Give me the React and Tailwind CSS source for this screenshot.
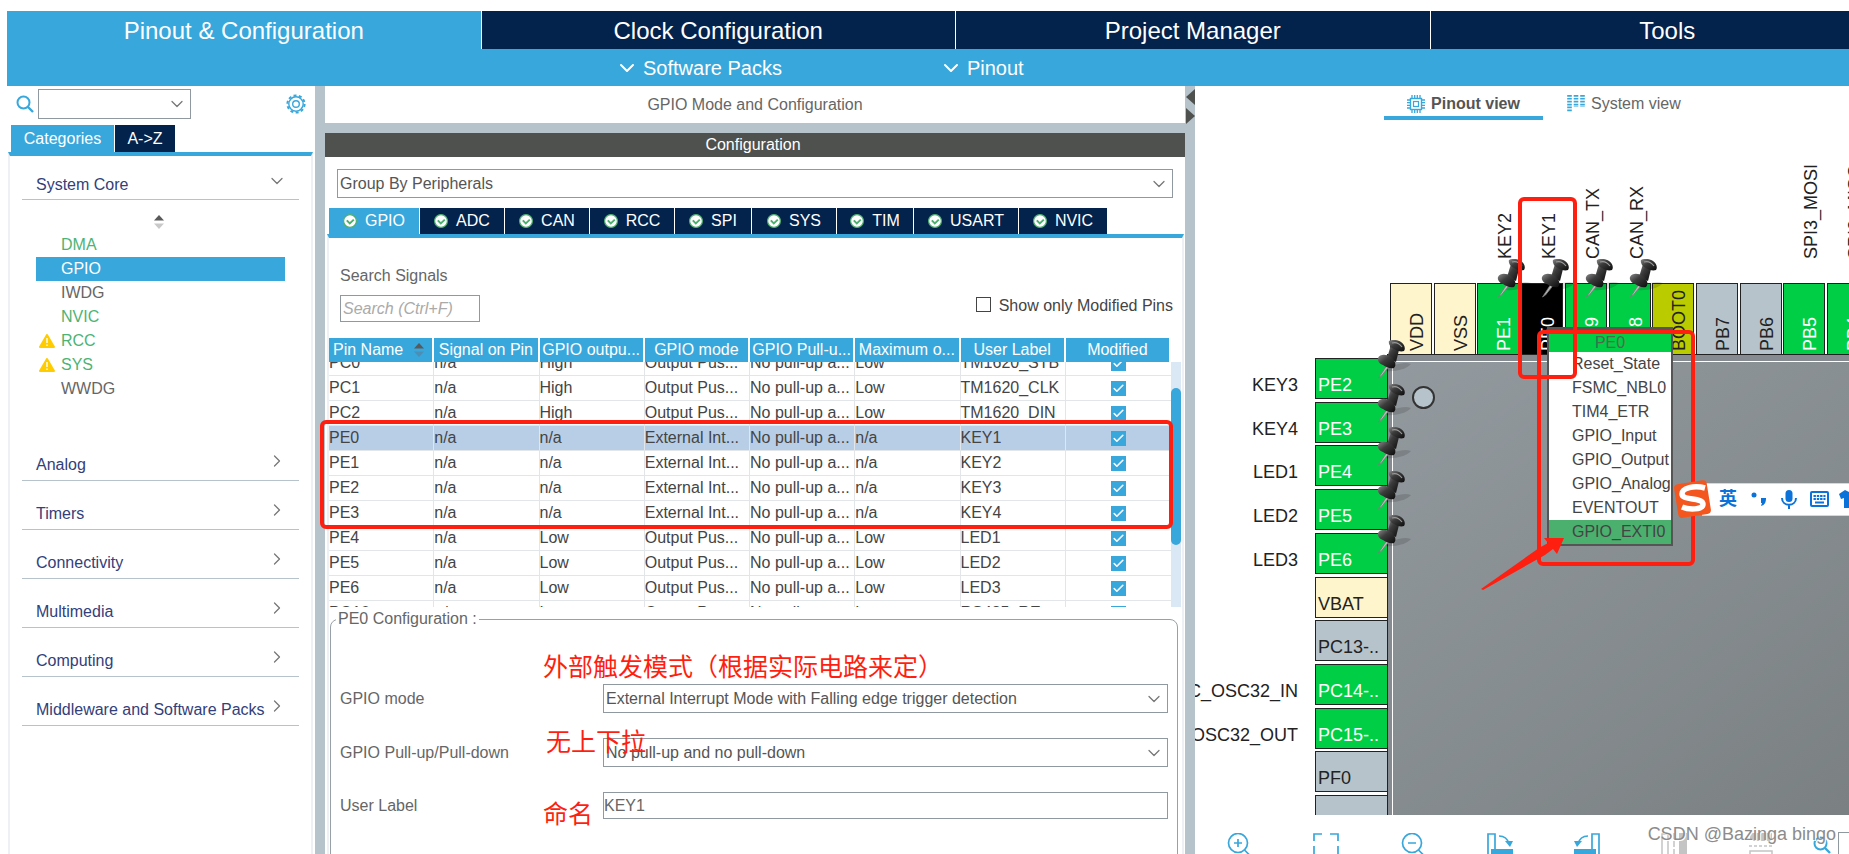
import { useEffect, useRef } from 'react';
import { ChevronDown, ChevronRight, Check } from 'lucide-react';
import clsx from 'clsx';

const MAIN_TABS = ['Pinout & Configuration', 'Clock Configuration', 'Project Manager', 'Tools'];

const CORE_ITEMS = [
  { name: 'DMA', used: true },
  { name: 'GPIO', used: true, selected: true },
  { name: 'IWDG' },
  { name: 'NVIC', used: true },
  { name: 'RCC', used: true, warn: true },
  { name: 'SYS', used: true, warn: true },
  { name: 'WWDG' },
];

const CATEGORIES = ['Analog', 'Timers', 'Connectivity', 'Multimedia', 'Computing', 'Middleware and Software Packs'];

const PERIPHERALS = [
  ['GPIO', 'w-[90px]'],
  ['ADC', 'w-[84px]'],
  ['CAN', 'w-[84px]'],
  ['RCC', 'w-[84px]'],
  ['SPI', 'w-[76px]'],
  ['SYS', 'w-[84px]'],
  ['TIM', 'w-[76px]'],
  ['USART', 'w-[104px]'],
  ['NVIC', 'w-[88px]'],
];

const COLUMNS = ['Pin Name', 'Signal on Pin', 'GPIO outpu...', 'GPIO mode', 'GPIO Pull-u...', 'Maximum o...', 'User Label', 'Modified'];

const OUT = 'Output Pus...';
const EXT = 'External Int...';
const PULL = 'No pull-up a...';

const ROWS = [
  ['PC0', 'n/a', 'High', OUT, PULL, 'Low', 'TM1620_STB'],
  ['PC1', 'n/a', 'High', OUT, PULL, 'Low', 'TM1620_CLK'],
  ['PC2', 'n/a', 'High', OUT, PULL, 'Low', 'TM1620_DIN'],
  ['PE0', 'n/a', 'n/a', EXT, PULL, 'n/a', 'KEY1'],
  ['PE1', 'n/a', 'n/a', EXT, PULL, 'n/a', 'KEY2'],
  ['PE2', 'n/a', 'n/a', EXT, PULL, 'n/a', 'KEY3'],
  ['PE3', 'n/a', 'n/a', EXT, PULL, 'n/a', 'KEY4'],
  ['PE4', 'n/a', 'Low', OUT, PULL, 'Low', 'LED1'],
  ['PE5', 'n/a', 'Low', OUT, PULL, 'Low', 'LED2'],
  ['PE6', 'n/a', 'Low', OUT, PULL, 'Low', 'LED3'],
  ['PG10', 'n/a', 'Low', OUT, PULL, 'Low', 'RS485_RE'],
];

const PIN_COLORS = {
  power: 'bg-[#fff5cc] text-[#222]',
  used: 'bg-[#00cf46] text-white',
  active: 'bg-black text-white',
  boot: 'bg-[#bacb00] text-[#222]',
  free: 'bg-[#b7c3ca] text-[#222]',
};

const TOP_PINS = [
  { name: 'VDD', kind: 'power' },
  { name: 'VSS', kind: 'power' },
  { name: 'PE1', kind: 'used', label: 'KEY2', pinned: true },
  { name: 'PE0', kind: 'active', label: 'KEY1', pinned: true },
  { name: 'PB9', kind: 'used', label: 'CAN_TX', pinned: true },
  { name: 'PB8', kind: 'used', label: 'CAN_RX', pinned: true },
  { name: 'BOOT0', kind: 'boot' },
  { name: 'PB7', kind: 'free' },
  { name: 'PB6', kind: 'free' },
  { name: 'PB5', kind: 'used', label: 'SPI3_MOSI' },
  { name: 'PB4', kind: 'used', label: 'SPI3_MISO' },
];

const LEFT_PINS = [
  { name: 'PE2', kind: 'used', label: 'KEY3', pinned: true },
  { name: 'PE3', kind: 'used', label: 'KEY4', pinned: true },
  { name: 'PE4', kind: 'used', label: 'LED1', pinned: true },
  { name: 'PE5', kind: 'used', label: 'LED2', pinned: true },
  { name: 'PE6', kind: 'used', label: 'LED3', pinned: true },
  { name: 'VBAT', kind: 'power' },
  { name: 'PC13-..', kind: 'free' },
  { name: 'PC14-..', kind: 'used', label: 'RCC_OSC32_IN' },
  { name: 'PC15-..', kind: 'used', label: 'RCC_OSC32_OUT' },
  { name: 'PF0', kind: 'free' },
  { name: '', kind: 'free' },
];

const PIN_PITCH = 43.7;
const pinOffset = (start, i) => Math.round(start + i * PIN_PITCH);

const PIN_SIGNALS = ['Reset_State', 'FSMC_NBL0', 'TIM4_ETR', 'GPIO_Input', 'GPIO_Output', 'GPIO_Analog', 'EVENTOUT', 'GPIO_EXTI0'];

// ---------- icons ----------

const SearchIcon = () => (
  <svg width="18" height="18" viewBox="0 0 18 18" fill="none" stroke="#38a7dc" strokeWidth="2">
    <circle cx="7.5" cy="7.5" r="6" />
    <path d="M12 12l5 5" strokeWidth="2.4" />
  </svg>
);

const GearIcon = () => (
  <svg width="20" height="20" viewBox="0 0 20 20" fill="none" stroke="#38a7dc">
    <circle cx="10" cy="10" r="8.6" strokeWidth="2" strokeDasharray="3 2.4" />
    <circle cx="10" cy="10" r="7.2" strokeWidth="1.4" />
    <circle cx="10" cy="10" r="3.3" strokeWidth="1.4" />
  </svg>
);

const SortIcon = ({ faded = '#c9c9c9' }) => (
  <svg width="10" height="14" viewBox="0 0 10 14">
    <path d="M0 5.5L5 0l5 5.5z" fill="#5a5a5a" />
    <path d="M0 8.5L5 14l5-5.5z" fill={faded} />
  </svg>
);

const WarnIcon = () => (
  <svg width="16" height="14" viewBox="0 0 16 14">
    <path d="M8 1L15 13H1z" fill="#ffcc00" stroke="#ffcc00" strokeWidth="2" strokeLinejoin="round" />
    <path d="M8 4v5M8 10.5v1.6" stroke="#fff" strokeWidth="1.4" />
  </svg>
);

const OkIcon = () => (
  <svg width="14" height="14" viewBox="0 0 14 14" fill="none">
    <circle cx="7" cy="7" r="6.4" fill="#fff" stroke="#4caf6e" strokeWidth="1.2" />
    <path d="M3.8 6.4l3 3 4-3.8" stroke="#4caf6e" strokeWidth="2" />
  </svg>
);

const ChipIcon = () => (
  <svg width="18" height="18" viewBox="0 0 18 18" fill="none" stroke="#38a7dc">
    <rect x="3.5" y="3.5" width="11" height="11" strokeWidth="1.4" />
    <rect x="6.5" y="6.5" width="5" height="5" strokeWidth="1.2" />
    <path d="M5 0v3M7.7 0v3M10.3 0v3M13 0v3M5 15v3M7.7 15v3M10.3 15v3M13 15v3M0 5h3M0 7.7h3M0 10.3h3M0 13h3M15 5h3M15 7.7h3M15 10.3h3M15 13h3" strokeWidth="1.3" />
  </svg>
);

const SystemIcon = () => (
  <svg width="18" height="18" viewBox="0 0 18 18" stroke="#38a7dc" strokeWidth="4.6" strokeDasharray="1.7 1.2">
    <path d="M2.5 0v17M9 0v12M15.5 0v12" />
  </svg>
);

const ZoomGlyph = ({ plus }) => (
  <svg width="26" height="26" viewBox="0 0 26 26" fill="none" stroke="#38a7dc" strokeWidth="1.7">
    <circle cx="12" cy="10" r="9.5" />
    <path d="M8 10h8M18.5 17l5 5" />
    {plus && <path d="M12 6v8" />}
  </svg>
);

const FitGlyph = () => (
  <svg width="26" height="26" viewBox="0 0 26 26" fill="none" stroke="#38a7dc" strokeWidth="1.7">
    <path d="M1 8V1h8M17 1h8v7M1 13v9M25 13v9" />
  </svg>
);

const RotateGlyph = ({ flip }) => (
  <svg width="26" height="26" viewBox="0 0 26 26" fill="none" stroke="#38a7dc" strokeWidth="1.7" className={flip ? '-scale-x-100' : ''}>
    <path d="M1 24V1h7v23" />
    <path d="M4 16h22v8H4z" fill="#38a7dc" stroke="none" />
    <path d="M12 3c6 0 9 4 10 8" />
    <path d="M18 8h8l-3 6z" fill="#38a7dc" stroke="none" />
  </svg>
);

const GrayColumns = () => (
  <svg width="26" height="26" viewBox="0 0 26 26" fill="none" stroke="#c4c4c4" strokeWidth="1.5">
    <path d="M1 24V1h6v23" />
    <path d="M13 0v26" strokeDasharray="6 2" />
    <path d="M18 0h8v24h-8z" fill="#c4c4c4" stroke="none" />
  </svg>
);

const GrayRows = () => (
  <svg width="26" height="26" viewBox="0 0 26 26" fill="none" stroke="#c4c4c4" strokeWidth="1.5">
    <path d="M2 0h22v8H2z" fill="#c4c4c4" stroke="none" />
    <path d="M1 13h24" strokeDasharray="3 2" />
    <path d="M2 18h22v7H2z" />
  </svg>
);

const PushPin = ({ className, style }) => (
  <svg width="40" height="40" viewBox="0 0 40 40" className={className} style={style}>
    <defs>
      <linearGradient id="pinHead" x1="0" y1="0" x2="1" y2="1">
        <stop offset="0" stopColor="#8a8a8a" />
        <stop offset="0.4" stopColor="#3c3c3c" />
        <stop offset="1" stopColor="#0c0c0c" />
      </linearGradient>
    </defs>
    <path d="M9 30c6-4 16-9 25-6-4 5-16 8-25 7z" fill="#000" opacity="0.14" />
    <path d="M10 25L1.500 38l3-2 8-10z" fill="#b9b9b9" stroke="#777" strokeWidth="0.8" />
    <path d="M14 5l8 5-3 12-9-4z" fill="url(#pinHead)" />
    <path d="M1 18c2-4 8-4 13-1 4 3 6 8 3 11-4 1-8-1-11-3-3-1-6-4-5-7z" fill="url(#pinHead)" />
    <path d="M12 1c4-2 9-1 12 1 3 2 5 6 3 9-3 1-7 0-10-2-3-1-6-5-5-8z" fill="url(#pinHead)" />
    <path d="M15 3c3-1 7 0 10 4" stroke="#999" strokeWidth="1.2" fill="none" />
  </svg>
);

// ---------- shared controls ----------

function Combo({ id, label, value, className }) {
  return (
    <div className={clsx('relative', className)}>
      <select id={id} aria-label={label} className="h-full w-full appearance-none border border-[#8f999f] bg-white pl-0.5 pr-8 text-[#555] outline-none">
        <option>{value}</option>
      </select>
      <ChevronDown size={20} strokeWidth={1.5} className="pointer-events-none absolute right-1 top-1/2 -translate-y-1/2 text-[#777]" />
    </div>
  );
}

function Note({ className, children }) {
  return <p className={clsx('pointer-events-none absolute whitespace-nowrap text-[25px] leading-8 text-[#ff1f10]', className)}>{children}</p>;
}

function RedBox({ className }) {
  return <div className={clsx('pointer-events-none absolute rounded-md border-4 border-[#ff1f10]', className)} />;
}

// ---------- header ----------

function Header() {
  return (
    <header className="ml-[7px] mt-[11px] shrink-0 overflow-hidden bg-[#38a7dc] text-white">
      <nav className="flex h-[38px] w-[1897px] gap-px">
        {MAIN_TABS.map((tab, i) => (
          <button key={tab} className={clsx('flex-1 pt-px text-2xl leading-9', i > 0 && 'bg-[#03224c] shadow-[-1px_0_#fff]')}>
            {tab}
          </button>
        ))}
      </nav>
      <div className="flex h-[37px] items-center gap-[157px] pl-[608px] text-xl">
        {['Software Packs', 'Pinout'].map((menu) => (
          <button key={menu} className="flex items-center gap-2">
            <ChevronDown size={24} strokeWidth={2} className="-mr-1" />
            {menu}
          </button>
        ))}
      </div>
    </header>
  );
}

// ---------- left panel ----------

function Sidebar() {
  return (
    <aside className="overflow-hidden pl-2">
      <div className="flex h-9 items-center pl-2 pr-[9px]">
        <SearchIcon />
        <Combo label="Search peripherals" value="" className="ml-1 h-[30px] w-[153px]" />
        <button aria-label="Settings" className="ml-auto">
          <GearIcon />
        </button>
      </div>
      <div className="mt-[3px] flex gap-px pl-[3px]">
        <button className="h-[27px] w-[103px] bg-[#38a7dc] text-white">Categories</button>
        <button className="h-[27px] w-[60px] bg-[#03224c] text-white">A-&gt;Z</button>
      </div>
      <div className="mr-0.5 h-full border-x-2 border-t-4 border-x-[#eef1f4] border-t-[#38a7dc] px-3 pt-1">
        <button className="flex h-10 w-full items-end justify-between border-b border-[#b7c3ca] pb-0.5 pl-[14px] pr-3 text-[#33407a]">
          System Core
          <ChevronDown size={20} strokeWidth={1.5} className="mb-[6px] text-[#777]" />
        </button>
        <div className="mt-[15px] flex justify-center pr-1">
          <SortIcon />
        </div>
        <ul className="mt-1 h-[199px] px-[14px]">
          {CORE_ITEMS.map(({ name, used, selected, warn }) => (
            <li
              key={name}
              className={clsx(
                'grid h-6 grid-cols-[25px_1fr] items-center',
                selected ? 'bg-[#38a7dc] text-white' : used ? 'text-[#4db374]' : 'text-[#666]'
              )}
            >
              <span className="pl-[3px]">{warn && <WarnIcon />}</span>
              {name}
            </li>
          ))}
        </ul>
        {CATEGORIES.map((name) => (
          <button key={name} className="flex h-[49px] w-full items-end justify-between border-b border-[#b7c3ca] pb-[3px] pl-[14px] pr-3 text-[#33407a]">
            <span className="whitespace-nowrap">{name}</span>
            <ChevronRight size={20} strokeWidth={1.5} className="mb-[6px] shrink-0 text-[#777]" />
          </button>
        ))}
      </div>
    </aside>
  );
}

// ---------- pin table ----------

function PinTable() {
  const scroller = useRef(null);

  useEffect(() => {
    scroller.current.scrollTop = 11;
  }, []);

  return (
    <div className="relative mt-4 flex pr-px">
      <div ref={scroller} className="h-[269px] flex-1 overflow-hidden">
        <table className="w-full table-fixed border-separate border-spacing-0">
          <thead className="sticky top-0 z-10">
            <tr className="h-6">
              {COLUMNS.map((col, i) => (
                <th key={col} className="border-r-2 border-white bg-[#38a7dc] p-0 font-normal text-white">
                  <div className={clsx('whitespace-nowrap', i === 0 && 'flex items-center justify-between pl-1 pr-2')}>
                    {col}
                    {i === 0 && <SortIcon faded="#4c8fb5" />}
                  </div>
                </th>
              ))}
            </tr>
          </thead>
          <tbody>
            {ROWS.map((row) => (
              <tr key={row[0]} className={clsx('h-[25px] text-[#444]', row[0] === 'PE0' && 'bg-[#b8cee6]')}>
                {row.map((cell, i) => (
                  <td key={i} className="whitespace-nowrap border-b border-r border-[#e3e6e9] p-0">
                    {cell}
                  </td>
                ))}
                <td className="border-b border-[#e3e6e9] p-0">
                  <span className="mx-auto grid w-[15px]">
                    <input type="checkbox" defaultChecked aria-label={`${row[0]} modified`} className="size-[15px] appearance-none bg-[#38a7dc] [grid-area:1/1]" />
                    <Check size={15} strokeWidth={3} className="pointer-events-none p-px text-white [grid-area:1/1]" />
                  </span>
                </td>
              </tr>
            ))}
          </tbody>
        </table>
      </div>
      <div className="mt-6 w-[10px] bg-[#d9e8f4] pt-[26px]">
        <div className="h-[157px] rounded-full bg-[#38a7dc]" />
      </div>
      <RedBox className="-left-[9px] right-[9px] top-[82px] h-[109px]" />
    </div>
  );
}

// ---------- middle panel ----------

function ConfigPanel() {
  return (
    <section className="min-w-0 bg-white">
      <h2 className="h-[37px] text-center leading-[37px] text-[#666]">GPIO Mode and Configuration</h2>
      <h3 className="mb-3 h-[34px] border-t-[10px] border-[#b7c3ca] bg-[#4f514f] pr-1 text-center text-white">Configuration</h3>
      <Combo label="Group by" value="Group By Peripherals" className="mx-3 h-[29px]" />
      <div className="ml-1 mt-[10px] flex gap-px">
        {PERIPHERALS.map(([name, width], i) => (
          <button key={name} className={clsx('flex h-[26px] items-center justify-center gap-2 text-white', width, i ? 'bg-[#03224c]' : 'bg-[#38a7dc]')}>
            <OkIcon />
            {name}
          </button>
        ))}
      </div>
      <div className="ml-0.5 mr-px border-x-2 border-t-4 border-x-[#eef1f4] border-t-[#38a7dc] pt-[26px]">
        <div className="pl-[11px] pr-[9px] text-[#666]">
          <label htmlFor="signals">Search Signals</label>
          <div className="mt-[7px] flex h-[27px] justify-between">
            <input id="signals" placeholder="Search (Ctrl+F)" className="w-[140px] border border-[#8f999f] px-0.5 italic outline-none placeholder:text-[#aaa]" />
            <label className="flex items-start gap-2 pt-px leading-5 text-[#444]">
              <input type="checkbox" className="mt-px size-[15px] appearance-none border border-[#444] bg-white" />
              Show only Modified Pins
            </label>
          </div>
        </div>
        <PinTable />
        <fieldset className="relative ml-px mr-1 h-[260px] rounded-lg border border-[#98a1a7] px-[9px] pt-[53px] text-[#666]">
          <legend className="-ml-1 px-0.5 leading-6">PE0 Configuration :</legend>
          <div className="grid grid-cols-[263px_1fr] items-center gap-y-[25px]">
            <label htmlFor="mode">GPIO mode</label>
            <Combo id="mode" value="External Interrupt Mode with Falling edge trigger detection" className="h-[29px]" />
            <label htmlFor="pull">GPIO Pull-up/Pull-down</label>
            <Combo id="pull" value="No pull-up and no pull-down" className="h-[29px]" />
            <label htmlFor="userLabel">User Label</label>
            <input id="userLabel" defaultValue="KEY1" className="h-[27px] border border-[#8f999f] outline-none" />
          </div>
          <Note className="left-[212px] top-[20px]">外部触发模式（根据实际电路来定）</Note>
          <Note className="left-[215px] top-[95px]">无上下拉</Note>
          <Note className="left-[212px] top-[167px]">命名</Note>
        </fieldset>
      </div>
    </section>
  );
}

// ---------- pinout canvas ----------

function PinMenu() {
  return (
    <div className="absolute left-[352px] top-[207px] w-[126px] border-2 border-t-[6px] border-[#555] bg-white text-[#444]">
      <p className="h-[19px] bg-[#00cf46] text-center leading-[19px] text-[#4b6b4b]">PE0</p>
      {PIN_SIGNALS.map((signal) => (
        <button key={signal} className={clsx('block h-6 w-full whitespace-nowrap pl-[23px] text-left', signal === 'GPIO_EXTI0' && 'bg-[#4bb06e]')}>
          {signal}
        </button>
      ))}
    </div>
  );
}

function ImeBar() {
  return (
    <div className="absolute left-[479px] top-[359px] flex h-10 w-[220px] items-center">
      <svg width="38" height="40" viewBox="0 0 38 40" className="z-10 shrink-0">
        <rect x="2" y="3" width="33" height="34" rx="4" fill="#f4561f" transform="rotate(-9 19 20)" />
        <path d="M31 9C20 6 8 9 8 15c0 7 21 3 21 10 0 6-14 6-21 3" fill="none" stroke="#fff" strokeWidth="5.500" />
      </svg>
      <div className="-ml-[10px] flex h-[33px] flex-1 items-center border-y border-[#c9d9f0] bg-white pl-[17px] text-[#0b72d9]">
        <span className="text-lg font-bold">英</span>
        <svg width="16" height="20" viewBox="0 0 16 20" className="ml-[14px]" fill="#0b72d9">
          <circle cx="3" cy="6" r="2.500" />
          <path d="M10 9h5c0 4-1 7-5 8l1-3h-1z" />
        </svg>
        <svg width="16" height="20" viewBox="0 0 16 20" className="ml-[14px]" fill="none" stroke="#0b72d9" strokeWidth="2">
          <rect x="4.500" y="1" width="7" height="12" rx="3.500" fill="#0b72d9" stroke="none" />
          <path d="M1 9c0 9 14 9 14 0M8 15v5" />
        </svg>
        <svg width="19" height="16" viewBox="0 0 19 16" className="ml-[13px]" fill="none" stroke="#0b72d9" strokeWidth="2">
          <rect x="1" y="1" width="17" height="14" rx="1" />
          <path d="M3.500 5h12M3.500 8h12" strokeDasharray="2.400 0.900" />
          <path d="M5 11.500h9" />
        </svg>
        <svg width="20" height="18" viewBox="0 0 20 18" className="ml-[10px]" fill="#0b72d9">
          <path d="M6 0l4 2 4-2 6 4-2 5-3-1v10H5V8L2 9 0 4z" />
        </svg>
      </div>
    </div>
  );
}

function PinoutCanvas() {
  return (
    <div className="relative min-h-0 flex-1 overflow-hidden text-lg text-[#222]">
      {/* package body */}
      <div className="absolute -right-40 bottom-0 left-[192px] top-[234px] border-l border-t border-[#222] bg-[#858b90] pl-1 pt-1.5">
        <div className="h-full border-l border-t border-white bg-linear-to-br from-[#939a9f] to-[#777d7e]">
          <div className="ml-[19px] mt-6 size-[23px] rounded-full border-2 border-[#333] bg-[#b7c3ca]" />
        </div>
      </div>

      {TOP_PINS.map(({ name, kind, label }, i) => (
        <div key={name} className="absolute top-0 flex h-[234px] w-[42px] flex-col justify-end" style={{ left: pinOffset(195, i) }}>
          <span className="mb-6 ml-[18px] rotate-180 self-start leading-5 [writing-mode:vertical-rl]">{label}</span>
          <div className={clsx('flex h-[71px] items-end justify-center border border-b-0 border-[#222] pb-[3px] pl-3', PIN_COLORS[kind])}>
            <span className="rotate-180 leading-5 [writing-mode:vertical-rl]">{name}</span>
          </div>
        </div>
      ))}

      {LEFT_PINS.map(({ name, kind, label }, i) => (
        <div key={i} className="absolute left-0 flex h-[41px] w-[192px] items-stretch" style={{ top: pinOffset(238, i) }}>
          <span className="flex w-[103px] items-end justify-end pb-0.5 leading-6">{label}</span>
          <div className={clsx('ml-[17px] flex flex-1 items-end border border-r-0 border-[#222] pb-px pl-0.5 leading-6', PIN_COLORS[kind])}>{name}</div>
        </div>
      ))}

      {TOP_PINS.map((pin, i) => pin.pinned && <PushPin key={pin.name} className="absolute top-[139px]" style={{ left: pinOffset(215, i) }} />)}
      {LEFT_PINS.map((pin, i) => pin.pinned && <PushPin key={pin.name} className="absolute left-[182px]" style={{ top: pinOffset(220, i) }} />)}

      <div className="text-base">
        <PinMenu />
      </div>
      <ImeBar />

      <RedBox className="left-[323px] top-[77px] h-[182px] w-[59px]" />
      <RedBox className="left-[342px] top-[210px] h-[236px] w-[158px]" />
      <svg width="84" height="54" viewBox="0 0 84 54" className="absolute left-[286px] top-[417px]">
        <path d="M0 52L58 11 67 6 63 1 83 1 76 17 72 12 64 18 2 53z" fill="#ff1f10" />
      </svg>
    </div>
  );
}

function PinoutPanel() {
  return (
    <section className="relative flex min-h-0 flex-col overflow-hidden bg-white">
      <div className="flex h-[34px] shrink-0 gap-[14px] pl-[189px] text-[#555]">
        <button className="flex h-full w-[159px] items-center justify-center gap-[6px] border-b-4 border-[#38a7dc] pt-[6px] font-bold">
          <ChipIcon />
          Pinout view
        </button>
        <button className="flex h-[30px] items-center gap-[6px] pl-[10px] pt-[6px] text-[#666]">
          <SystemIcon />
          System view
        </button>
      </div>
      <PinoutCanvas />
      <div className="flex h-[39px] shrink-0 items-start gap-[61px] overflow-hidden pl-[31px] pt-[18px]">
        <button aria-label="Zoom in"><ZoomGlyph plus /></button>
        <button aria-label="Best fit"><FitGlyph /></button>
        <button aria-label="Zoom out"><ZoomGlyph /></button>
        <button aria-label="Rotate right"><RotateGlyph /></button>
        <button aria-label="Rotate left"><RotateGlyph flip /></button>
        <button aria-label="Flip columns"><GrayColumns /></button>
        <button aria-label="Flip rows"><GrayRows /></button>
        <div className="-ml-[22px] flex items-start gap-[7px] pt-[3px]">
          <SearchIcon />
          <input aria-label="Find pin" className="-mt-1 h-8 w-40 border border-[#8f999f]" />
        </div>
      </div>
      <p className="pointer-events-none absolute bottom-2 right-[13px] text-lg leading-6 text-[#8c8c8c] [text-shadow:1px_1px_#fff]">CSDN @Bazinga bingo</p>
    </section>
  );
}

export default function App() {
  return (
    <div className="flex h-screen flex-col overflow-hidden bg-white font-['Liberation_Sans','Noto_Sans_CJK_SC',sans-serif] text-base">
      <Header />
      <main className="grid min-h-0 flex-1 grid-cols-[315px_10px_860fr_10px_654fr] grid-rows-[minmax(0,1fr)]">
        <Sidebar />
        <div className="bg-[#b7c3ca]" />
        <ConfigPanel />
        <div className="bg-[#b7c3ca] pt-[3px]">
          <svg width="10" height="36" viewBox="0 0 10 36" fill="#4f514f">
            <path d="M10 0v16L1 8zM1 19v16l9-8z" />
          </svg>
        </div>
        <PinoutPanel />
      </main>
    </div>
  );
}
